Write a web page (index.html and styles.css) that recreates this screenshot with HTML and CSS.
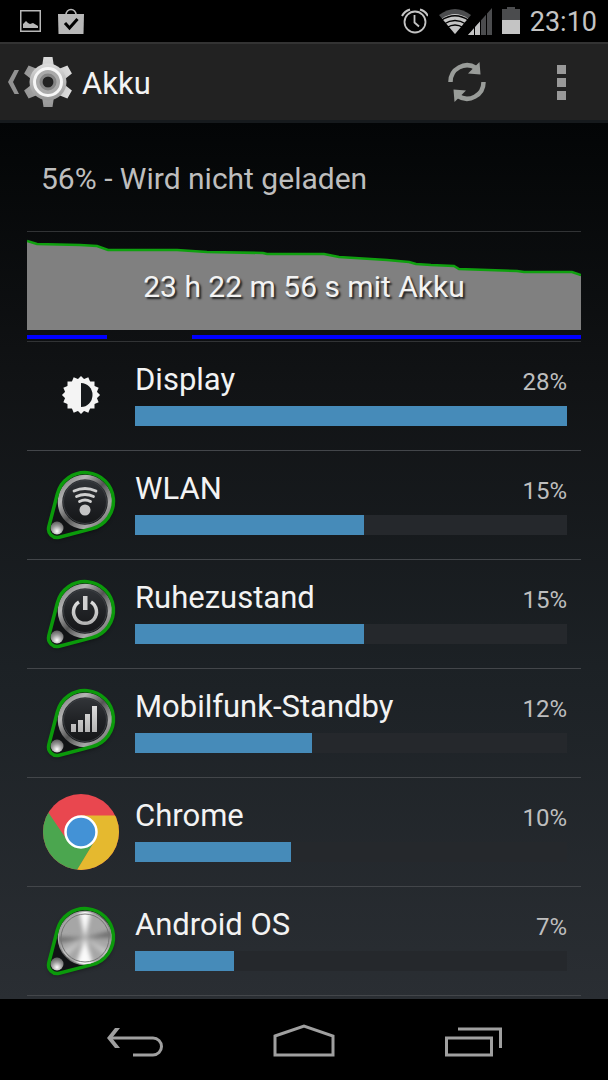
FILE: index.html
```html
<!DOCTYPE html>
<html lang="de">
  <head>
    <meta charset="UTF-8" />
    <meta name="viewport" content="width=device-width, initial-scale=1.0" />
    <title>Akku</title>
    <link rel="stylesheet" href="styles.css">
  </head>
  <body>
    <div class="statusBar">
      <div class="notifications">
        <svg width="21" height="22" viewBox="0 0 21 22">
          <rect x="0.75" y="0.75" width="19.5" height="20.5" fill="none" stroke="#b8b8b8" stroke-width="1.5" />
          <path d="M3 18v-4l3-3 2 2 2 1 3-1 5 3v2z" fill="#b8b8b8" />
        </svg>
        <svg width="26" height="26" viewBox="0 0 26 26">
          <path d="M8 7a5 5.500 0 0 1 10 0" fill="none" stroke="#b8b8b8" stroke-width="1.500" />
          <path d="M0 6h26l-0.500 20h-25z" fill="#b8b8b8" />
          <path d="M7 15l4.500 5 8-9" fill="none" stroke="#000" stroke-width="3" />
        </svg>
      </div>
      <div class="systemIcons">
        <svg width="28" height="28" viewBox="0 0 28 28" fill="none" stroke="#c4c4c4">
          <circle cx="15" cy="15" r="10.500" stroke-width="1.800" />
          <path d="M14.500 8v7.500l4.500 4" stroke-width="1.800" />
          <path d="M2 9a13 13 0 0 1 8-6.500M28 9a13 13 0 0 0-8-6.500" stroke-width="2" />
        </svg>
        <svg width="54" height="28" viewBox="0 0 54 28">
          <path d="M1 8q16-12 32 0l-16 19z" fill="#4b4c4e" />
          <path d="M4 11.500q13-9 26 0l-13 15.500z" fill="#c4c4c4" />
          <path d="M3 13.500q14-9.500 28 0M6 17q11-7 22 0M9 20.500q8-5 16 0" fill="none" stroke="#000" stroke-width="1.400" />
          <path d="M30 28L54 1v27z" fill="#4b4c4e" />
          <path d="M30 28L42 14.500v13.500z" fill="#c4c4c4" />
          <path d="M36.500 10v18M42.500 8v20M48.500 0v28" stroke="#000" />
        </svg>
        <svg width="18" height="28" viewBox="0 0 18 28">
          <path d="M0 2h5v-2h8v2h5v12h-18z" fill="#4b4c4e" />
          <path d="M0 13h18v14h-18z" fill="#c4c4c4" />
        </svg>
        <span class="clock">23:10</span>
      </div>
    </div>

    <header class="actionBar">
      <a href="#" class="upLink" aria-label="Nach oben">
        <svg width="12" height="24" viewBox="0 0 12 24">
          <path d="M6.500 0h4.500l-6 12 6 12h-4.500l-6.500-12z" fill="#929292" />
        </svg>
        <svg width="50" height="52" viewBox="0 0 50 52">
          <defs>
            <linearGradient id="gearFill" x1="0" y1="0" x2="0" y2="1">
              <stop offset="0" stop-color="#dcdcdc" />
              <stop offset="1" stop-color="#969696" />
            </linearGradient>
            <mask id="gearHole">
              <rect width="50" height="52" fill="#fff" />
              <circle cx="25" cy="26" r="5.500" fill="#000" />
            </mask>
          </defs>
          <g mask="url(#gearHole)">
            <g fill="url(#gearFill)">
              <path id="teeth" d="M20.500 1h9l1.500 10h-12zM20.500 51h9l1.500-10h-12z" />
              <use href="#teeth" transform="rotate(60 25 26)" />
              <use href="#teeth" transform="rotate(120 25 26)" />
              <circle cx="25" cy="26" r="18.500" />
            </g>
            <circle cx="25" cy="26" r="13.500" fill="#aaa" stroke="#f6f6f6" stroke-width="3" />
            <circle cx="25" cy="26" r="7" fill="none" stroke="#858585" stroke-width="3" />
          </g>
        </svg>
      </a>
      <h1 class="title">Akku</h1>
      <button class="actionBtn" aria-label="Aktualisieren">
        <svg width="38" height="42" viewBox="0 0 38 42">
          <g id="refreshArrow">
            <path d="M2.500 21a16.500 16.500 0 0 1 25.500-14" fill="none" stroke="#999c99" stroke-width="4.500" />
            <path d="M31.500 1l1 12.500-12.500-1z" fill="#999c99" />
          </g>
          <use href="#refreshArrow" transform="rotate(180 19 21)" />
        </svg>
      </button>
      <button class="actionBtn" aria-label="Weitere Optionen">
        <svg width="9" height="35" viewBox="0 0 9 35">
          <path d="M0 0h9v9h-9zM0 13h9v9h-9zM0 26h9v9h-9z" fill="#999" />
        </svg>
      </button>
    </header>

    <main class="content">
      <h2 class="status">56% - Wird nicht geladen</h2>

      <div class="history">
        <svg class="chart" viewBox="0 0 554 108" preserveAspectRatio="none">
          <path d="M0 9L10 12L53 13L70 14L81 18L150 18L180 20L236 21L240 22L297 22L312 25L360 28L382 30L389 32L404 33L427 34L432 37L490 39L497 40L545 40L554 44V98H0z" fill="#808080" />
          <path d="M0 9L10 12L53 13L70 14L81 18L150 18L180 20L236 21L240 22L297 22L312 25L360 28L382 30L389 32L404 33L427 34L432 37L490 39L497 40L545 40L554 43" fill="none" stroke="#0fa00f" stroke-width="2.500" />
          <path d="M0 105h80M165 105h389" stroke="#00f" stroke-width="4" />
        </svg>
        <span class="duration">23 h 22 m 56 s mit Akku</span>
      </div>

      <ul class="usageList">
        <li class="usage">
          <svg class="icon" viewBox="0 0 108 108">
            <g fill="#f4f4f4">
              <rect id="rays" x="40.500" y="39.500" width="27" height="27" />
              <use href="#rays" transform="rotate(22.500 54 53)" />
              <use href="#rays" transform="rotate(45 54 53)" />
              <use href="#rays" transform="rotate(67.500 54 53)" />
            </g>
            <path d="M54 41a11.500 12 0 0 1 0 24z" fill="#15181b" />
          </svg>
          <div class="details">
            <div class="labels"><span class="name">Display</span><span class="percent">28%</span></div>
            <div class="track"><div class="bar" style="width: 100%"></div></div>
          </div>
        </li>
        <li class="usage">
          <svg class="icon" viewBox="0 0 108 108">
            <defs>
              <linearGradient id="metal" x1="0" y1="0" x2="1" y2="1">
                <stop offset="0" stop-color="#777" />
                <stop offset="0.250" stop-color="#b4b4b4" />
                <stop offset="0.500" stop-color="#555" />
                <stop offset="0.750" stop-color="#a8a8a8" />
                <stop offset="1" stop-color="#555" />
              </linearGradient>
              <linearGradient id="face" x1="0" y1="0" x2="0" y2="1">
                <stop offset="0" stop-color="#34373b" />
                <stop offset="0.500" stop-color="#202225" />
                <stop offset="1" stop-color="#141517" />
              </linearGradient>
              <radialGradient id="stud" cx="0.500" cy="0.750" r="0.700">
                <stop offset="0" stop-color="#fff" />
                <stop offset="0.600" stop-color="#999" />
                <stop offset="1" stop-color="#666" />
              </radialGradient>
              <linearGradient id="glyph" x1="0" y1="0" x2="0" y2="1">
                <stop offset="0" stop-color="#dedede" />
                <stop offset="1" stop-color="#b4b4b4" />
              </linearGradient>
              <filter id="soft"><feGaussianBlur stdDeviation="2" /></filter>
              <clipPath id="discClip"><circle cx="58" cy="51" r="26" /></clipPath>
            </defs>
            <g id="badge">
              <path d="M30 45A28.500 28.500 0 1 1 65 80L32 88A8.500 8.500 0 0 1 22 78z" fill="#000" opacity="0.500" filter="url(#soft)" />
              <path d="M30.400 42.800A28.500 28.500 0 1 1 65.200 77.600L32.200 86.200A8.500 8.500 0 0 1 21.800 75.800z" fill="#111315" />
              <circle cx="58" cy="51" r="25" fill="url(#face)" stroke="url(#metal)" stroke-width="4.500" />
              <circle cx="58" cy="51" r="21.500" fill="none" stroke="#3a3d41" />
              <circle cx="30" cy="77" r="6.500" fill="url(#stud)" />
              <path d="M30.400 42.800A28.500 28.500 0 1 1 65.200 77.600L32.200 86.200A8.500 8.500 0 0 1 21.800 75.800z" fill="none" stroke="#0b9a0b" stroke-width="3.500" />
            </g>
            <g fill="none" stroke="#cfcfcf" stroke-width="2.800" stroke-linecap="round">
              <path d="M47 40q11-5 22 0M49.500 45.500q8.500-4 17 0M52.500 50.500q5.500-3 11 0" />
            </g>
            <circle cx="58" cy="59" r="5.500" fill="#c4c4c4" />
          </svg>
          <div class="details">
            <div class="labels"><span class="name">WLAN</span><span class="percent">15%</span></div>
            <div class="track"><div class="bar" style="width: 53%"></div></div>
          </div>
        </li>
        <li class="usage">
          <svg class="icon" viewBox="0 0 108 108">
            <use href="#badge" />
            <path d="M52 42a11.500 11.500 0 1 0 12 0" fill="none" stroke="url(#glyph)" stroke-width="3.500" />
            <path d="M56 36h4.500v14h-4.500z" fill="#d0d0d0" />
          </svg>
          <div class="details">
            <div class="labels"><span class="name">Ruhezustand</span><span class="percent">15%</span></div>
            <div class="track"><div class="bar" style="width: 53%"></div></div>
          </div>
        </li>
        <li class="usage">
          <svg class="icon" viewBox="0 0 108 108">
            <use href="#badge" />
            <path d="M44 55h5v8h-5zM51 51h5v12h-5zM58 45h5v18h-5zM65 37h5v26h-5z" fill="url(#glyph)" />
          </svg>
          <div class="details">
            <div class="labels"><span class="name">Mobilfunk-Standby</span><span class="percent">12%</span></div>
            <div class="track"><div class="bar" style="width: 41%"></div></div>
          </div>
        </li>
        <li class="usage">
          <svg class="icon" viewBox="0 0 108 108">
            <defs>
              <clipPath id="chromeClip"><circle cx="54" cy="54" r="38" /></clipPath>
            </defs>
            <g clip-path="url(#chromeClip)">
              <rect width="108" height="108" fill="#e9474f" />
              <path d="M21 34L40 62L66 66L49 94L10 100V20z" fill="#4ba64f" />
              <path d="M54 37.500H100V100H44L50 92L67 64z" fill="#e5b92f" />
            </g>
            <circle cx="54" cy="54" r="15.500" fill="#4392d6" stroke="#fff" stroke-width="2.500" />
          </svg>
          <div class="details">
            <div class="labels"><span class="name">Chrome</span><span class="percent">10%</span></div>
            <div class="track"><div class="bar" style="width: 36%"></div></div>
          </div>
        </li>
        <li class="usage">
          <svg class="icon" viewBox="0 0 108 108">
            <use href="#badge" />
            <g clip-path="url(#discClip)">
              <rect x="30" y="22" width="56" height="58" fill="#a6a6a6" />
              <g filter="url(#soft)">
                <path d="M58 51L50 15H66zM58 51L45 90H70z" fill="#fafafa" />
                <path d="M58 51L20 49V58zM58 51L96 40V51z" fill="#707070" />
                <path d="M58 51L20 72V90zM58 51L96 70V85z" fill="#c4c4c4" />
              </g>
            </g>
            <circle cx="58" cy="51" r="24" fill="none" stroke="#777" />
          </svg>
          <div class="details">
            <div class="labels"><span class="name">Android OS</span><span class="percent">7%</span></div>
            <div class="track"><div class="bar" style="width: 23%"></div></div>
          </div>
        </li>
      </ul>
    </main>

    <nav class="navBar">
      <button class="navBtn" aria-label="Zurück">
        <svg width="56" height="34" viewBox="0 0 56 34">
          <path d="M3 15h43a8.500 8.500 0 0 1 0 17h-20" fill="none" stroke="#a0a0a0" stroke-width="3" />
          <path d="M8 5h5l-8 10 8 10h-5l-8-10z" fill="#a0a0a0" />
        </svg>
      </button>
      <button class="navBtn" aria-label="Startbildschirm">
        <svg width="62" height="34" viewBox="0 0 62 34">
          <path d="M2 13L31 3L60 13V32H2z" fill="none" stroke="#a0a0a0" stroke-width="3" />
        </svg>
      </button>
      <button class="navBtn" aria-label="Letzte Apps">
        <svg width="58" height="34" viewBox="0 0 58 34">
          <path d="M2.500 15h45v17h-45zM14 6h42.500v19" fill="none" stroke="#a0a0a0" stroke-width="3" />
        </svg>
      </button>
    </nav>
  </body>
</html>
```
FILE: styles.css
```css
* {
  box-sizing: border-box;
}

body {
  margin: 0;
  min-height: 100vh;
  display: flex;
  flex-direction: column;
  font-family: Roboto, "Liberation Sans", sans-serif;
  color: #f3f3f3;
  background-color: #000;
}

svg {
  display: block;
  flex-shrink: 0;
}

button {
  display: flex;
  align-items: center;
  justify-content: center;
  padding: 0;
  border: none;
  background: none;
  cursor: pointer;
}

.statusBar {
  display: flex;
  justify-content: space-between;
  height: 42px;
  padding: 0 11px 0 20px;
}

.notifications,
.systemIcons {
  display: flex;
  align-items: center;
  gap: 17px;
}

.systemIcons {
  gap: 10px;
}

.clock {
  padding-top: 2px;
  font-size: 27px;
  color: #c4c4c4;
}

.actionBar {
  display: flex;
  align-items: center;
  height: 81px;
  border-top: 2px solid #333;
  border-bottom: 3px solid #161a1d;
  background-color: #222;
}

.upLink {
  display: flex;
  align-items: center;
  gap: 3px;
  padding-left: 8px;
}

.title {
  flex: 1;
  margin: 0 0 0 9px;
  padding-top: 2px;
  font-size: 31px;
  font-weight: normal;
}

.actionBtn {
  width: 94px;
  height: 100%;
}

.content {
  flex: 1;
  padding: 0 27px 3px;
  background: linear-gradient(#030506 0%, #111315 30%, #1c2125 62%, #2a2e33 100%);
}

.status {
  display: flex;
  align-items: center;
  height: 109px;
  margin: 0;
  padding: 2px 14px 0;
  font-size: 30px;
  font-weight: normal;
  color: #bebebe;
  border-bottom: 1px solid #313335;
}

.history {
  position: relative;
  height: 110px;
  border-bottom: 1px solid #313335;
}

.chart {
  width: 100%;
  height: 108px;
}

.duration {
  position: absolute;
  inset: 0;
  line-height: 110px;
  text-align: center;
  font-size: 30px;
  text-shadow: 2px 2px 2px #222;
}

.usageList {
  list-style-type: none;
  margin: 0;
  padding: 0;
}

.usage {
  display: flex;
  border-bottom: 1px solid #43464a;
}

.icon {
  width: 108px;
  height: 108px;
}

.details {
  flex: 1;
  padding: 20px 14px 0 0;
}

.labels {
  display: flex;
  justify-content: space-between;
  align-items: baseline;
  height: 44px;
  line-height: 36px;
}

.name {
  font-size: 31px;
}

.percent {
  font-size: 24px;
  color: #bebebe;
}

.track {
  height: 20px;
  background-color: #25282c;
}

.bar {
  height: 100%;
  background-color: #468bb9;
}

.navBar {
  display: flex;
  height: 81px;
  padding: 0 50px;
}

.navBtn {
  flex: 1;
}
```
